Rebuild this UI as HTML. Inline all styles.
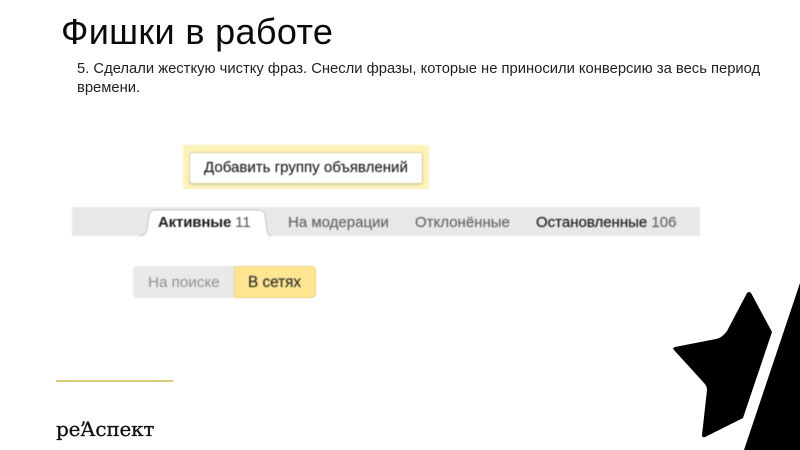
<!DOCTYPE html>
<html><head><meta charset="utf-8">
<style>
html,body{margin:0;padding:0;background:#fff}
#p{position:relative;width:800px;height:450px;overflow:hidden;background:#fff;font-family:"Liberation Sans",sans-serif}
.a{position:absolute;white-space:nowrap}
#ui{position:absolute;left:0;top:0;width:800px;height:450px;filter:blur(.45px)}
</style></head><body>
<div id="p">
<div class="a" style="left:61px;top:11px;font-size:36px;line-height:42px;color:#0a0a0a;letter-spacing:.35px">Фишки в работе</div>
<div class="a" style="left:77px;top:60px;font-size:14.77px;line-height:19px;color:#222;filter:blur(.25px)">5. Сделали жесткую чистку фраз. Снесли фразы, которые не приносили конверсию за весь период<br>времени.</div>

<div id="ui">
<div class="a" style="left:183px;top:145px;width:246px;height:44px;background:#fdf2b8"></div>
<div class="a" style="left:189px;top:152px;width:234px;height:32px;box-sizing:border-box;background:#fff;border:1px solid #d8cf9c;border-radius:3px;box-shadow:0 1px 1px #d9d2a8"></div>
<div class="a" style="left:204px;top:159px;font-size:15.05px;line-height:18px;color:#222;-webkit-text-stroke:.15px #222">Добавить группу объявлений</div>

<div class="a" style="left:72px;top:207px;width:628px;height:29px;background:#e8e8ea"></div>
<svg class="a" style="left:136px;top:207px" width="140" height="32" viewBox="0 0 140 32">
<path d="M4 29Q10 28 11 22L13 8Q14 3 20 3H123Q128 3 129 8L131 24Q132 28 135 29V32H4Z" fill="#fff"/>
<path d="M4 29Q10 28 11 22L13 8Q14 3 20 3H123Q128 3 129 8L131 24Q132 28 135 29" fill="none" stroke="#c4c4c4" stroke-width="1"/>
</svg>
<div class="a" style="left:158px;top:214px;font-size:15px;line-height:18px;color:#1a1a1a;font-weight:bold;letter-spacing:-.15px">Активные <span style="font-weight:normal;color:#555;letter-spacing:0">11</span></div>
<div class="a" style="left:288px;top:214px;font-size:15px;line-height:18px;color:#666;-webkit-text-stroke:.15px #666">На модерации</div>
<div class="a" style="left:415px;top:214px;font-size:15px;line-height:18px;color:#666;-webkit-text-stroke:.15px #666">Отклонённые</div>
<div class="a" style="left:536px;top:214px;font-size:15px;line-height:18px;color:#1f1f1f;-webkit-text-stroke:.2px #1f1f1f">Остановленные <span style="color:#666;-webkit-text-stroke:.15px #666">106</span></div>

<div class="a" style="left:133px;top:266px;width:102px;height:32px;background:#e9e9e9;border-radius:4px 0 0 4px"></div>
<div class="a" style="left:234px;top:266px;width:82px;height:32px;box-sizing:border-box;background:#fde68f;border:1px solid #e6d58a;border-radius:0 4px 4px 0"></div>
<div class="a" style="left:148px;top:274px;font-size:15.2px;line-height:18px;color:#8f8f8f">На поиске</div>
<div class="a" style="left:248px;top:274px;font-size:15.3px;line-height:18px;color:#333;-webkit-text-stroke:.2px #333">В сетях</div>
</div>

<div class="a" style="left:56px;top:380px;width:117px;height:2px;background:#d8cb7c"></div>
<div class="a" style="left:56px;top:416px;font-family:'DejaVu Serif',serif;font-size:20px;line-height:26px;color:#111;letter-spacing:-.2px;-webkit-text-stroke:.3px #111">ре<span style="margin-left:-1px;margin-right:-5px">ʼ</span>Аспект</div>

<svg class="a" style="left:0;top:0" width="800" height="450" viewBox="0 0 800 450">
<path d="M747 293Q749 291 751 293L772 332L743 418L705 437Q702 438 702 435L707 390Q707 386 704 383L674 350Q672 348 675 347L716 339Q722 338 727 331Z" fill="#000"/>
<path d="M744 450L800 283V450Z" fill="#000"/>
</svg>
</div>
</body></html>
